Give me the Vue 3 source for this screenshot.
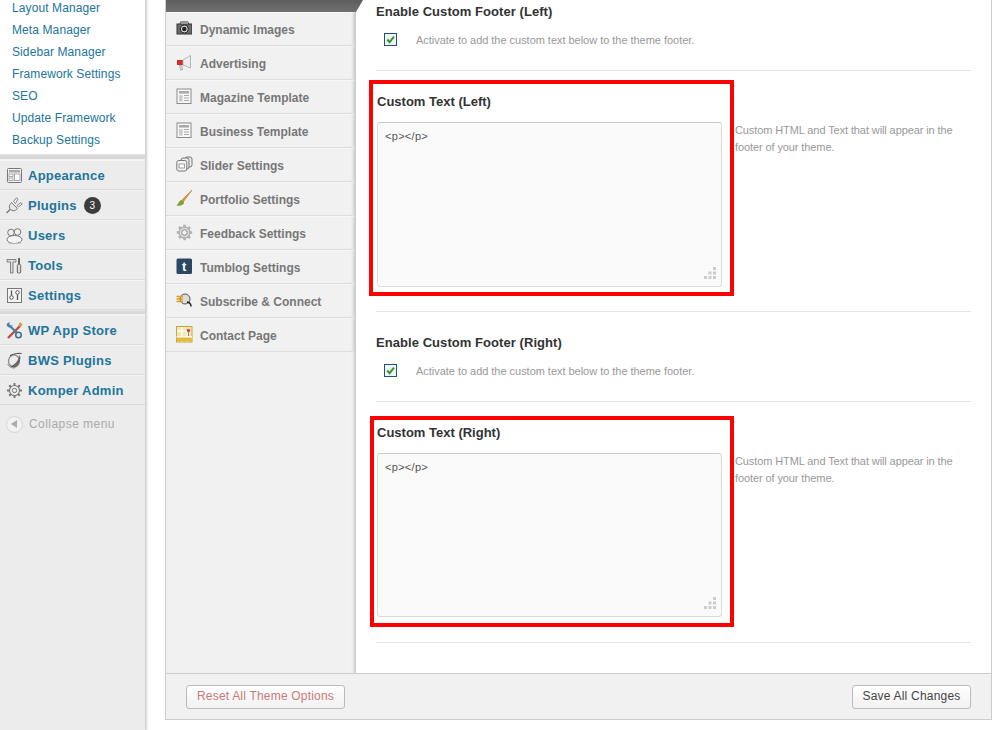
<script setup>
const subItems = ['Layout Manager','Meta Manager','Sidebar Manager','Framework Settings','SEO','Update Framework','Backup Settings']
const icons = {
  appearance: '<rect x="1.5" y="1.5" width="14" height="14" rx="1" fill="#f4f4f4" stroke="#777"/><rect x="3" y="3" width="11" height="2.5" fill="#aaa"/><rect x="3" y="7" width="4" height="2.5" fill="#fff" stroke="#888" stroke-width=".7"/><rect x="3" y="11" width="4" height="2.5" fill="#fff" stroke="#888" stroke-width=".7"/><rect x="8.5" y="7" width="5.5" height="6.5" fill="#fff" stroke="#888" stroke-width=".7"/>',
  plugins: '<path d="M.5 16 4.500 12" stroke="#777" stroke-width="1.2"/><path d="M5.500 5.500 11.500 11.500 9.500 13.200C8 14 6 14 4.500 12.500 3 11 3 9 4 7.500Z" fill="#e6e6e6" stroke="#777"/><path d="M7.500 4.500 10.500 .8 12 2.200 9.500 6.500ZM11 8.500 15 5.500 16.200 7 12.500 10Z" fill="#f4f4f4" stroke="#777" stroke-width=".9"/>',
  users: '<circle cx="5" cy="5.500" r="3.300" fill="#f0f0f0" stroke="#777"/><circle cx="11.500" cy="5" r="3.300" fill="#f0f0f0" stroke="#777"/><ellipse cx="8.500" cy="12.500" rx="7.500" ry="4" fill="#f6f6f6" stroke="#777"/><path d="M2 15.800C6 17 12 17 15 15.800" stroke="#bbb" fill="none"/>',
  tools: '<path d="M1 2.500H10V5H7V16H4.500V5H1Z" fill="#ddd" stroke="#777" stroke-width=".9"/><path d="M13 1V7" stroke="#555" stroke-width="1.800"/><rect x="11.300" y="7.500" width="3.400" height="8.500" rx="1" fill="#ddd" stroke="#666"/>',
  settings: '<rect x="1.500" y="1.500" width="14" height="14" fill="#f4f4f4" stroke="#777"/><circle cx="5.500" cy="10.500" r="1.800" fill="#fff" stroke="#555"/><path d="M5.500 3.500V8.500" stroke="#555" stroke-width="1.300"/><circle cx="11.500" cy="5.500" r="1.800" fill="#fff" stroke="#555"/><path d="M11.500 7.500V13" stroke="#555" stroke-width="1.300"/>',
  wpstore: '<path d="M2 16 14 4" stroke="#c0503a" stroke-width="2.400"/><path d="M14 0 16.500 2.500 14.500 5 12.500 3Z" fill="#c8a040"/><path d="M3 3 13 13" stroke="#4c7fa8" stroke-width="2.200"/><path d="M1 4C0 2 2 0 4 .6L3 2.500 5 4.200 6.500 2.500C7 5 4 7 1 4Z" fill="#4c7fa8"/><circle cx="12.500" cy="13" r="2.800" fill="#dfe8ef" stroke="#3d6e96" stroke-width="1.500"/>',
  bws: '<ellipse cx="8" cy="9" rx="5.500" ry="6" fill="#ececec" stroke="#888" stroke-width="1.200"/><path d="M4 14C8 14 13.500 8 13.500 2.500 15.500 6 14 12 9 15.500 7 16 5 15 4 14Z" fill="#666"/><path d="M4 3.500C9 1.500 13 1 15.500 1.500" stroke="#444" fill="none"/><path d="M1.500 12C3 15 6 16.500 9 16" stroke="#999" fill="none"/>',
  gear: '<circle cx="8.500" cy="8.500" r="5" fill="#eee" stroke="#777" stroke-width="1.100"/><circle cx="8.500" cy="8.500" r="2.200" fill="#ececec" stroke="#777"/><path d="M8.500 1V3.500M8.500 13.500V16M1 8.500H3.500M13.500 8.500H16M3.200 3.200 5 5M12 12 13.800 13.800M13.800 3.200 12 5M5 12 3.200 13.800" stroke="#777" stroke-width="2"/>',
  camera: '<path d="M4.500 1.500H12L13 3.500H16V14.500H.5V3.500H3.500Z" fill="#333"/><rect x="1.500" y="4.500" width="14" height="9" fill="#6a6a6a"/><rect x="4.500" y="2" width="7.500" height="2" fill="#999"/><circle cx="8.300" cy="9" r="4" fill="#ddd" stroke="#222"/><circle cx="8.300" cy="9" r="2.300" fill="#222"/>',
  megaphone: '<path d="M1 6H7V11H1Z" fill="#d62c2c"/><path d="M7 6 14.500 1.500V14L7 11Z" fill="#eee" stroke="#aaa" stroke-width=".8"/><path d="M3.500 11.500H6L6.500 16H4.500Z" fill="#e4e4e4" stroke="#999" stroke-width=".7"/>',
  template: '<rect x="1" y="1" width="14" height="14.500" fill="#f8f8f8" stroke="#8a8a8a"/><rect x="3" y="3" width="10" height="2.600" fill="#aaa"/><rect x="3" y="7" width="3.600" height="6.500" fill="#ccc"/><path d="M8 7.500H13M8 10H13M8 12.500H13" stroke="#aaa" stroke-width="1.200"/>',
  slider: '<rect x="9" y="1" width="7" height="10" rx="2" fill="#eee" stroke="#777"/><rect x="5" y="2" width="8" height="11" rx="2" fill="#eee" stroke="#777"/><rect x=".8" y="4.500" width="10" height="10.500" rx="2" fill="#f4f4f4" stroke="#777"/><rect x="3" y="8" width="5.500" height="4" fill="#fff" stroke="#888" stroke-width=".8"/>',
  brush: '<path d="M16 0 6 10 7.500 11.500Z" fill="#e39a3e" stroke="#c8792a" stroke-width=".7"/><path d="M5.500 10C3 10.500 3 13 .5 15.500 4.500 16.500 8.500 14.500 8 12Z" fill="#7da43c"/>',
  gearLight: '<circle cx="8.500" cy="8.500" r="5.500" fill="#ddd" stroke="#999"/><circle cx="8.500" cy="8.500" r="2.800" fill="#f1f1f1" stroke="#888"/><path d="M8.500 .8V3.500M8.500 13.500V16.200M.8 8.500H3.500M13.500 8.500H16.200M3 3 5 5M12 12 14 14M14 3 12 5M5 12 3 14" stroke="#b0b0b0" stroke-width="2.600"/>',
  tumblr: '<rect x=".5" y=".5" width="15.500" height="15.500" rx="1.500" fill="#2c4762"/><text x="8.200" y="13" text-anchor="middle" font-family="Liberation Sans" font-weight="700" font-size="13" fill="#fff">t</text>',
  subscribe: '<circle cx="9" cy="7" r="5" fill="#ddd" stroke="#555"/><path d="M.5 4.500H7M.5 7H7M.5 9.500H7" stroke="#e09a18" stroke-width="1.700"/><path d="M11 10C14 10.500 15 12 15 14.500" stroke="#222" stroke-width="1.500" fill="none"/>',
  contact: '<rect x=".5" y=".5" width="15.500" height="15.500" fill="#f4e6b0" stroke="#c9a63e"/><path d="M.5 11H16M6 1V16M11 5V16M1 5H11" stroke="#fff" stroke-width="1.300"/><rect x="1" y="11.500" width="14.500" height="4" fill="#e5b93b"/><circle cx="12.500" cy="4.500" r="1.700" fill="#c84a3c"/><path d="M12.500 6V10" stroke="#888"/>'
}
const group1 = [
  { label: 'Appearance', icon: 'appearance' },
  { label: 'Plugins', icon: 'plugins', badge: 3 },
  { label: 'Users', icon: 'users' },
  { label: 'Tools', icon: 'tools' },
  { label: 'Settings', icon: 'settings' }
]
const group2 = [
  { label: 'WP App Store', icon: 'wpstore' },
  { label: 'BWS Plugins', icon: 'bws' },
  { label: 'Komper Admin', icon: 'gear' }
]
const tabs = [
  ['Dynamic Images','camera'],['Advertising','megaphone'],['Magazine Template','template'],['Business Template','template'],
  ['Slider Settings','slider'],['Portfolio Settings','brush'],['Feedback Settings','gearLight'],['Tumblog Settings','tumblr'],
  ['Subscribe & Connect','subscribe'],['Contact Page','contact']
]
const sections = [
  { enable: 'Enable Custom Footer (Left)', custom: 'Custom Text (Left)', cls: 'left' },
  { enable: 'Enable Custom Footer (Right)', custom: 'Custom Text (Right)', cls: 'right' }
]
</script>

<template>
  <div class="page">
    <aside class="sidebar">
      <ul class="submenu">
        <li v-for="s in subItems" :key="s">{{ s }}</li>
      </ul>
      <div class="sep first"></div>
      <div v-for="m in group1" :key="m.label" class="menu-item">
        <svg class="m-icon" viewBox="0 0 17 17" v-html="icons[m.icon]"></svg>
        <span>{{ m.label }}</span>
        <b v-if="m.badge" class="badge">{{ m.badge }}</b>
      </div>
      <div class="sep second"></div>
      <div v-for="m in group2" :key="m.label" class="menu-item">
        <svg class="m-icon" viewBox="0 0 17 17" v-html="icons[m.icon]"></svg>
        <span>{{ m.label }}</span>
      </div>
      <div class="collapse">
        <span class="collapse-btn"><i></i></span>
        <span>Collapse menu</span>
      </div>
    </aside>

    <main class="panel">
      <div class="panel-body">
        <nav class="tabs">
          <div class="tab-active"></div>
          <div v-for="t in tabs" :key="t[0]" class="tab">
            <svg class="t-icon" viewBox="0 0 17 17" v-html="icons[t[1]]"></svg>
            <span>{{ t[0] }}</span>
          </div>
        </nav>
        <div class="content">
          <template v-for="sec in sections" :key="sec.cls">
            <section class="opt enable" :class="sec.cls">
              <h3>{{ sec.enable }}</h3>
              <div class="check-row">
                <span class="check">
                  <svg viewBox="0 0 12 12"><path d="M2.500 6 5 9 9.800 2.800" fill="none" stroke="#2b9a2b" stroke-width="2.200"/></svg>
                </span>
                <span class="hint">Activate to add the custom text below to the theme footer.</span>
              </div>
            </section>
            <section class="opt custom" :class="sec.cls">
              <div class="annot"></div>
              <div class="custom-main">
                <h3>{{ sec.custom }}</h3>
                <div class="textarea">
                  <code>&lt;p&gt;&lt;/p&gt;</code>
                  <svg class="grip" viewBox="0 0 13 13"><path d="M10 1h3v3h-3zM5.500 5.500h3v3h-3zM10 5.500h3v3h-3zM1 10h3v3H1zM5.500 10h3v3h-3zM10 10h3v3h-3z" fill="#ccc"/></svg>
                </div>
              </div>
              <p class="desc">Custom HTML and Text that will appear in the footer of your theme.</p>
            </section>
          </template>
        </div>
      </div>
      <footer class="panel-foot">
        <button class="btn reset">Reset All Theme Options</button>
        <button class="btn save">Save All Changes</button>
      </footer>
    </main>
  </div>
</template>

<style>
html, body { margin: 0; background: #fff; overflow: hidden; }
</style>

<style scoped>
* { box-sizing: border-box; }
.page { display: flex; width: 1000px; height: 730px; overflow: hidden; background: #fff; font-family: "Liberation Sans", Arial, sans-serif; }

.sidebar { width: 145px; height: 730px; flex: none; background: #ececec; box-shadow: 1px 0 2px 1px #d0d0d0; }
.submenu { list-style: none; margin: -3px 0 0; padding: 0 0 3px; background: #fff; }
.submenu li { height: 22px; line-height: 22px; padding-left: 12px; font-size: 12px; letter-spacing: .1px; color: #21759b; }
.sep { height: 6px; background: #d9d9d9; border-top: 1px solid #e4e4e4; border-bottom: 1px solid #f2f2f2; }
.sep.second { height: 5px; }
.menu-item { height: 30px; display: flex; align-items: center; padding-left: 6px; border-bottom: 1px solid #dcdcdc; border-top: 1px solid #f4f4f4; font-size: 13px; font-weight: 700; letter-spacing: .25px; color: #21759b; }
.m-icon { width: 17px; height: 17px; flex: none; margin-right: 5px; }
.badge { width: 17px; height: 17px; margin-left: 7px; border-radius: 50%; background: #3c3c3c; color: #fff; font-size: 10px; font-weight: 400; line-height: 17px; text-align: center; letter-spacing: 0; }
.collapse { display: flex; align-items: center; height: 38px; padding-left: 6px; font-size: 12px; letter-spacing: .45px; color: #aaa; }
.collapse-btn { width: 17px; height: 17px; margin-right: 6px; border-radius: 50%; background: #f2f2f2; border: 1px solid #d5d5d5; display: flex; align-items: center; justify-content: center; }
.collapse-btn i { width: 0; height: 0; border-style: solid; border-width: 4px 6px 4px 0; border-color: transparent #aaa transparent transparent; margin-left: -2px; }

.panel { width: 827px; height: 720px; margin-left: 20px; flex: none; display: flex; flex-direction: column; border: solid #ccc; border-width: 0 1px 1px 1px; }
.panel-body { flex: 1; display: flex; min-height: 0; }
.tabs { position: relative; width: 190px; flex: none; background: #f1f1f1; border-right: 1px solid #ccc; box-shadow: inset -3px 0 3px -2px #ccc; }
.tab-active { height: 12px; width: 197px; background: linear-gradient(#5e5e5e, #707070); clip-path: polygon(0 0, 100% 0, 190px 100%, 0 100%); }
.tab { height: 34px; display: flex; align-items: center; padding: 3px 0 0 10px; border-bottom: 1px solid #dcdcdc; font-size: 12px; font-weight: 700; color: #777; box-shadow: inset -3px 0 3px -2px #ccc, inset 0 1px 0 #f8f8f8; }
.t-icon { width: 17px; height: 17px; flex: none; margin-right: 7px; margin-top: -4px; }

.content { flex: 1; padding: 0 20px; }
.opt { position: relative; }
h3 { margin: 0; font-size: 13px; font-weight: 700; letter-spacing: .06px; color: #333; line-height: 16px; }
.enable { height: 71px; padding-top: 4px; border-bottom: 1px solid #e5e5e5; }
.enable.right { height: 90px; padding-top: 23px; }
.check-row { display: flex; align-items: center; margin-top: 13px; padding-left: 8px; }
.check { width: 13px; height: 13px; flex: none; border: 1px solid #1f4f7f; background: #f4f4f4; margin-right: 19px; display: flex; }
.check svg { width: 11px; height: 11px; }
.hint { font-size: 11px; letter-spacing: -.03px; color: #999; }
.desc { font-size: 11px; letter-spacing: -.1px; color: #999; }

.custom { display: flex; height: 241px; border-bottom: 1px solid #e5e5e5; padding-top: 23px; }
.annot { position: absolute; left: -7px; top: 9px; width: 365px; height: 216px; border: 4px solid #f00; pointer-events: none; }
.custom.right .annot { left: -6px; top: 14px; width: 364px; height: 211px; }
.custom-main { width: 346px; flex: none; }
.custom-main h3 { padding-left: 1px; letter-spacing: 0; }
.textarea { position: relative; margin: 12px 0 0 1px; height: 165px; background: #fafafa; border: 1px solid #ddd; border-top-color: #ccc; border-radius: 3px; padding: 7px 7px; }
.custom.right .textarea { height: 164px; }
code { font-family: "Liberation Sans", Arial, sans-serif; font-size: 11px; letter-spacing: .3px; color: #555; display: block; line-height: 13px; }
.grip { position: absolute; right: 5px; bottom: 7px; width: 13px; height: 13px; }
.desc { margin: 0; padding: 28px 0 0 13px; width: 249px; line-height: 17px; }

.panel-foot { height: 46px; flex: none; background: #f1f1f1; border-top: 1px solid #ccc; display: flex; align-items: center; justify-content: space-between; padding: 0 20px; }
.btn { height: 24px; border: 1px solid #bbb; border-radius: 3px; background: linear-gradient(#fff, #f1f1f1); font-family: "Liberation Sans", Arial, sans-serif; font-size: 12px; letter-spacing: .2px; padding: 0 0 2px; }
.reset { width: 159px; color: #c97a7a; }
.save { width: 119px; color: #444; }
</style>
